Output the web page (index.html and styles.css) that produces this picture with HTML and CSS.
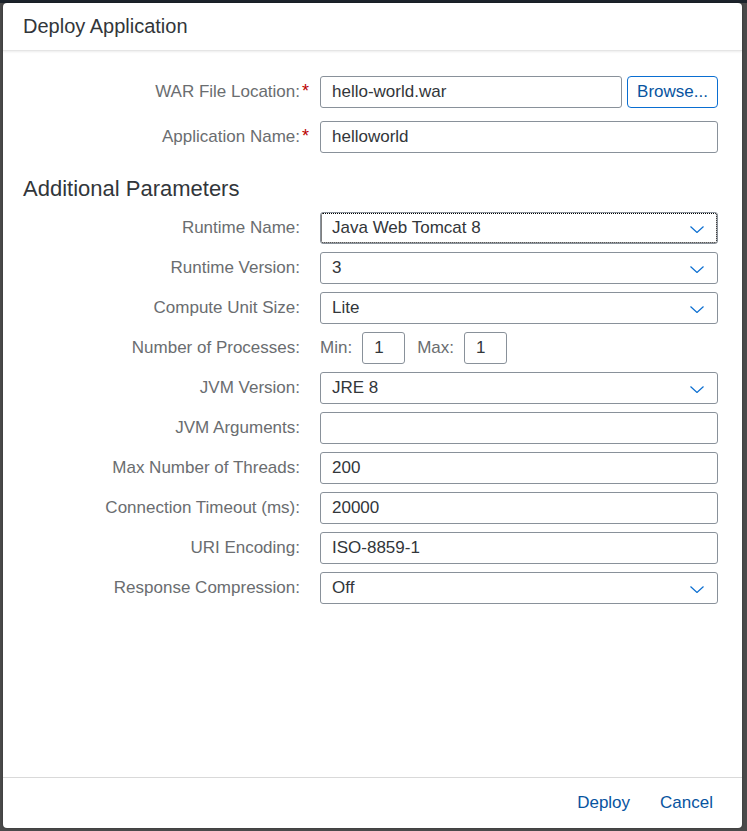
FILE: index.html
```html
<!DOCTYPE html>
<html lang="en">
<head>
<meta charset="UTF-8">
<title>Deploy Application</title>
<link rel="stylesheet" href="styles.css">
</head>
<body>
<div class="dialog">
<div class="dialog-header">
<h1 class="dialog-title">Deploy Application</h1>
</div>

<div class="dialog-content">
<div class="row row-top">
<span class="label required">WAR File Location:</span>
<div class="field-group">
<div class="field grow">hello-world.war</div>
<button class="browse-btn">Browse...</button>
</div>
</div>
<div class="row row-top">
<span class="label required">Application Name:</span>
<div class="field">helloworld</div>
</div>

<h2 class="section-title">Additional Parameters</h2>

<div class="row">
<span class="label">Runtime Name:</span>
<div class="field select focused">Java Web Tomcat 8
<svg class="chevron" width="14" height="7" viewBox="0 0 14 7"><path d="M0.5 0.5 L7 6.5 L13.5 0.5" fill="none" stroke="currentColor" stroke-width="1.2"/></svg>
</div>
</div>
<div class="row">
<span class="label">Runtime Version:</span>
<div class="field select">3
<svg class="chevron" width="14" height="7" viewBox="0 0 14 7"><path d="M0.5 0.5 L7 6.5 L13.5 0.5" fill="none" stroke="currentColor" stroke-width="1.2"/></svg>
</div>
</div>
<div class="row">
<span class="label">Compute Unit Size:</span>
<div class="field select">Lite
<svg class="chevron" width="14" height="7" viewBox="0 0 14 7"><path d="M0.5 0.5 L7 6.5 L13.5 0.5" fill="none" stroke="currentColor" stroke-width="1.2"/></svg>
</div>
</div>
<div class="row">
<span class="label">Number of Processes:</span>
<div class="field-group minmax">
<span class="inline-label">Min:</span>
<div class="field small">1</div>
<span class="inline-label max">Max:</span>
<div class="field small">1</div>
</div>
</div>
<div class="row">
<span class="label">JVM Version:</span>
<div class="field select">JRE 8
<svg class="chevron" width="14" height="7" viewBox="0 0 14 7"><path d="M0.5 0.5 L7 6.5 L13.5 0.5" fill="none" stroke="currentColor" stroke-width="1.2"/></svg>
</div>
</div>
<div class="row">
<span class="label">JVM Arguments:</span>
<div class="field"></div>
</div>
<div class="row">
<span class="label">Max Number of Threads:</span>
<div class="field">200</div>
</div>
<div class="row">
<span class="label">Connection Timeout (ms):</span>
<div class="field">20000</div>
</div>
<div class="row">
<span class="label">URI Encoding:</span>
<div class="field">ISO-8859-1</div>
</div>
<div class="row">
<span class="label">Response Compression:</span>
<div class="field select">Off
<svg class="chevron" width="14" height="7" viewBox="0 0 14 7"><path d="M0.5 0.5 L7 6.5 L13.5 0.5" fill="none" stroke="currentColor" stroke-width="1.2"/></svg>
</div>
</div>
</div>

<div class="dialog-footer">
<button class="footer-btn">Deploy</button>
<button class="footer-btn">Cancel</button>
</div>
</div>
</body>
</html>
```

FILE: styles.css
```css
html, body {
    height: 100%;
}

body {
    margin: 0;
    padding: 3px 5px 3px 3px;
    box-sizing: border-box;
    font-family: "Liberation Sans", Arial, sans-serif;
    background: linear-gradient(#1c232b 0, #1c232b 3px, #4a4a4a 3px);
}

.dialog {
    background-color: #fff;
    border-radius: 4px;
    height: 825px;
    display: flex;
    flex-direction: column;
    box-shadow: 0 0 2px rgba(0, 0, 0, 0.4);
}

.dialog-header {
    height: 47px;
    border-bottom: 1px solid #e5e5e5;
    box-shadow: 0 1px 2px rgba(0, 0, 0, 0.08);
    display: flex;
    align-items: center;
    padding-left: 20px;
}

.dialog-title {
    margin: 0;
    font-size: 20px;
    font-weight: normal;
    color: #32363a;
}

.dialog-content {
    flex: 1;
    padding: 25px 24px 0 0;
}

.row {
    display: flex;
    align-items: center;
    gap: 20px;
    height: 32px;
    margin-bottom: 8px;
}

.row-top {
    margin-bottom: 13px;
}

.label {
    flex: 1;
    text-align: right;
    font-size: 17px;
    color: #6a6d70;
    position: relative;
}

.label.required::after {
    content: "*";
    color: #bb0000;
    position: absolute;
    right: -9px;
    top: -1px;
    font-size: 18px;
}

.field {
    width: 398px;
    height: 32px;
    box-sizing: border-box;
    border: 1px solid #89919a;
    border-radius: 3px;
    padding: 0 11px;
    font-size: 17px;
    color: #32363a;
    display: flex;
    align-items: center;
    position: relative;
}

.field-group {
    width: 398px;
    display: flex;
    align-items: center;
    gap: 5px;
}

.field.grow {
    width: auto;
    flex: 1;
}

.browse-btn {
    height: 32px;
    width: 91px;
    border: 1px solid #0a6ed1;
    border-radius: 4px;
    background-color: #fff;
    color: #0854a0;
    font-family: inherit;
    font-size: 17px;
    padding: 0;
    cursor: pointer;
}

.select .chevron {
    position: absolute;
    right: 13px;
    top: 13px;
    color: #0a6ed1;
}

.field.focused {
    outline: 1px dotted #000;
    outline-offset: -2px;
}

.minmax {
    gap: 0;
}

.inline-label {
    font-size: 17px;
    color: #6a6d70;
    margin-right: 10px;
}

.inline-label.max {
    margin-left: 12px;
}

.field.small {
    width: 43px;
}

.section-title {
    margin: 24px 0 11px 20px;
    font-size: 22px;
    line-height: 24px;
    font-weight: normal;
    color: #32363a;
}

.dialog-footer {
    height: 50px;
    border-top: 1px solid #d9d9d9;
    display: flex;
    justify-content: flex-end;
    align-items: center;
    gap: 14px;
    padding-right: 21px;
}

.footer-btn {
    background: none;
    border: none;
    color: #0854a0;
    font-family: inherit;
    font-size: 17px;
    padding: 6px 8px;
    cursor: pointer;
}
```
